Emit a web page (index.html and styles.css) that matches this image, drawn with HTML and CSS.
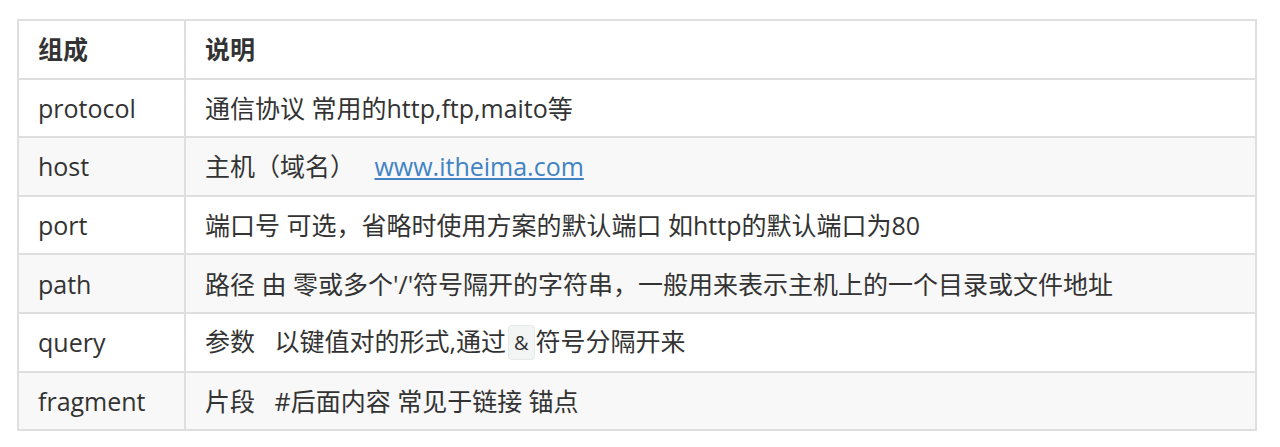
FILE: index.html
```html
<!DOCTYPE html>
<html lang="zh">
<head>
    <meta charset="UTF-8">
    <title>URL 组成</title>
    <link rel="stylesheet" href="styles.css">
</head>
<body>
    <table class="url-table">
        <thead>
            <tr>
                <th class="col-name">组成</th>
                <th>说明</th>
            </tr>
        </thead>
        <tbody>
            <tr>
                <td>protocol</td>
                <td>通信协议 常用的http,ftp,maito等</td>
            </tr>
            <tr>
                <td>host</td>
                <td class="pre">主机（域名）   <a href="#">www.itheima.com</a></td>
            </tr>
            <tr>
                <td>port</td>
                <td>端口号 可选，省略时使用方案的默认端口 如http的默认端口为80</td>
            </tr>
            <tr>
                <td>path</td>
                <td>路径 由 零或多个'/'符号隔开的字符串，一般用来表示主机上的一个目录或文件地址</td>
            </tr>
            <tr>
                <td>query</td>
                <td class="pre">参数   以键值对的形式,通过<code>&amp;</code>符号分隔开来</td>
            </tr>
            <tr>
                <td>fragment</td>
                <td class="pre">片段   #后面内容 常见于链接 锚点</td>
            </tr>
        </tbody>
    </table>
</body>
</html>
```

FILE: styles.css
```css
body {
    margin: 0;
    padding: 19px 24px 0 17px;
    background: #fff;
    font-family: "Open Sans", "Noto Sans CJK SC", sans-serif;
    color: #333;
}

.url-table {
    width: 1240px;
    border-collapse: collapse;
    font-size: 25px;
}

.url-table th,
.url-table td {
    border: 2px solid #dfdfdf;
    padding: 0 19px;
    height: 56.6px;
    text-align: left;
    line-height: 34px;
}

.url-table th {
    font-weight: bold;
}

.col-name {
    width: 127px;
}

.url-table tbody tr:nth-child(even) {
    background: #f8f8f8;
}

.pre {
    white-space: pre;
}

.url-table a {
    color: #4183c4;
    text-decoration: underline;
}

.url-table code {
    font-family: "Open Sans", "Noto Sans CJK SC", sans-serif;
    font-size: 20px;
    background: #f3f4f4;
    border: 1px solid #e7eaed;
    border-radius: 4px;
    padding: 3px 5px;
    margin: 0 1px 0 2px;
    vertical-align: 1px;
}
```
